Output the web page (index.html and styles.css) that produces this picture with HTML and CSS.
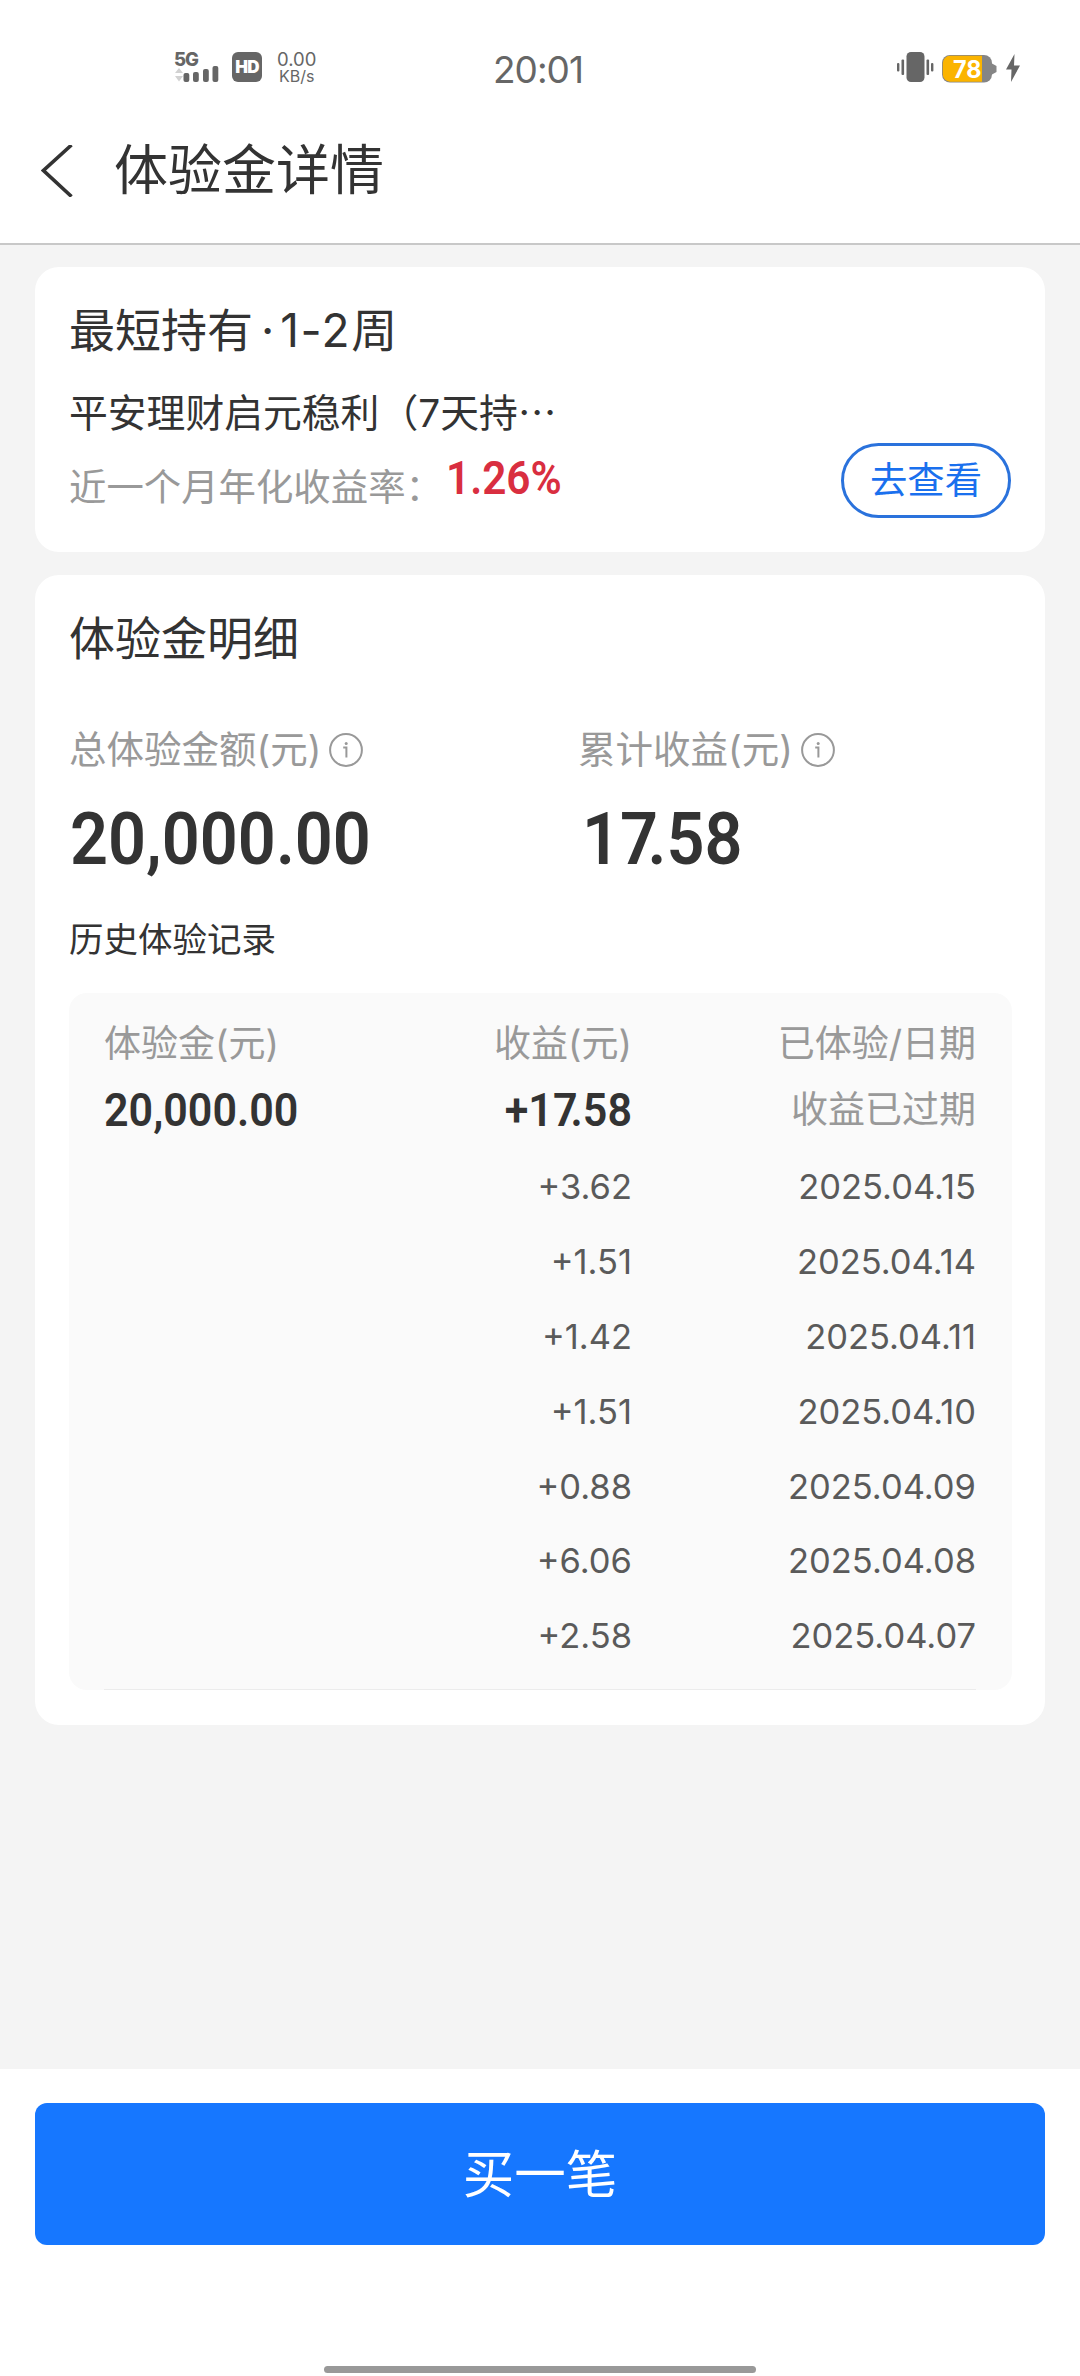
FILE: index.html
```html
<!DOCTYPE html>
<html lang="zh-CN">
<head>
<meta charset="utf-8">
<title>体验金详情</title>
<link rel="stylesheet" href="styles.css">
</head>
<body>
<div class="screen">
  <div class="status">
    <div class="status-left">
      <div class="signal">
        <span class="net-type">5G</span>
        <svg width="46" height="17" viewBox="0 0 46 17">
          <path d="M1 8L5 3L9 8ZM1 11L5 16.500L9 11Z" fill="#d2d2d2"/>
          <rect x="9.500" y="8" width="5.800" height="9" rx="2"/>
          <rect x="19" y="7" width="5.800" height="10" rx="2"/>
          <rect x="29" y="4" width="5.800" height="13" rx="2"/>
          <rect x="38.500" y="1" width="5.800" height="16" rx="2"/>
        </svg>
      </div>
      <span class="hd">HD</span>
      <span class="speed"><span>0.00</span><span class="unit">KB/s</span></span>
    </div>
    <div class="clock">20:01</div>
    <div class="status-right">
      <svg class="vibrate" width="38" height="30" viewBox="0 0 38 30">
        <rect x="9.500" y="0" width="18" height="30" rx="4.500"/>
        <rect x="4.500" y="7.500" width="2.600" height="15.500" rx="1"/>
        <rect x="0" y="11" width="2.400" height="8.500" rx="1"/>
        <rect x="29.500" y="7.500" width="2.600" height="15.500" rx="1"/>
        <rect x="34" y="11" width="2.400" height="8.500" rx="1"/>
      </svg>
      <svg class="battery" width="55" height="28" viewBox="0 0 55 28">
        <rect x="0" y="0" width="50" height="27.500" rx="8" fill="#858585"/>
        <path d="M50 8.500L54.500 11V17L50 19.500Z" fill="#858585"/>
        <path d="M40 .8H8A7.200 7.200 0 0 0 .8 8V19.500A7.200 7.200 0 0 0 8 26.700H40Z" fill="#fbb400"/>
        <text x="11" y="23" class="battery-level" textLength="28.500" lengthAdjust="spacingAndGlyphs">78</text>
      </svg>
      <svg class="bolt" width="14" height="28" viewBox="0 0 14 28"><path d="M8.500 0L0 15.500H5.500L5 28L14 11.500H8Z"/></svg>
    </div>
  </div>

  <header class="header">
    <svg class="back" width="32" height="52" viewBox="0 0 32 52"><path d="M30.500 0L2.500 25.500L30.500 51.500" fill="none" stroke="#333" stroke-width="3.600"/></svg>
    <h1>体验金详情</h1>
  </header>

  <main class="content">
    <section class="card product">
      <h2>最短持有<span class="dot">·</span><span class="term">1-2</span>周</h2>
      <p class="product-name">平安理财启元稳利（7天持⋯</p>
      <div class="rate-row">
        <span class="rate-label">近一个月年化收益率：</span>
        <span class="rate din">1.26%</span>
        <a class="view-btn">去查看</a>
      </div>
    </section>

    <section class="card detail">
      <h2>体验金明细</h2>
      <div class="totals">
        <div class="total">
          <div class="total-label">总体验金额(元)
            <svg class="info" width="34" height="34" viewBox="0 0 34 34"><circle cx="17" cy="17" r="15.900"/><path d="M14.200 14.500H17.400V24.500"/><circle class="pip" cx="17.200" cy="10.500" r="1.500"/></svg>
          </div>
          <div class="total-value din">20,000.00</div>
        </div>
        <div class="total">
          <div class="total-label">累计收益(元)
            <svg class="info" width="34" height="34" viewBox="0 0 34 34"><circle cx="17" cy="17" r="15.900"/><path d="M14.200 14.500H17.400V24.500"/><circle class="pip" cx="17.200" cy="10.500" r="1.500"/></svg>
          </div>
          <div class="total-value din second">1<span class="kern">7</span>.58</div>
        </div>
      </div>
      <h3>历史体验记录</h3>
      <div class="records">
        <div class="row head"><span>体验金(元)</span><span>收益(元)</span><span>已体验/日期</span></div>
        <div class="row sum"><span class="din">20,000.00</span><span class="din gain">+1<span class="kern">7</span>.58</span><span class="expired">收益已过期</span></div>
        <div class="row"><span></span><span>+3.62</span><span>2025.04.15</span></div>
        <div class="row"><span></span><span>+1.51</span><span>2025.04.14</span></div>
        <div class="row"><span></span><span>+1.42</span><span>2025.04.11</span></div>
        <div class="row"><span></span><span>+1.51</span><span>2025.04.10</span></div>
        <div class="row"><span></span><span>+0.88</span><span>2025.04.09</span></div>
        <div class="row"><span></span><span>+6.06</span><span>2025.04.08</span></div>
        <div class="row"><span></span><span>+2.58</span><span>2025.04.07</span></div>
        <div class="rule"></div>
      </div>
    </section>
  </main>

  <footer class="footer">
    <button class="buy">买一笔</button>
    <div class="home-bar"></div>
  </footer>
</div>
</body>
</html>
```
FILE: styles.css
```css
* { box-sizing: border-box; margin: 0; padding: 0; }

body {
  width: 1080px;
  background: #fff;
  color: #333;
  font-family: Inter, "Noto Sans CJK SC", sans-serif;
}

h1, h2, h3 { font-weight: 400; }

.screen {
  display: flex;
  flex-direction: column;
  height: 2376px;
  overflow: hidden;
}

/* Status bar */
.status {
  display: grid;
  grid-template-columns: 316px 96px 1fr;
  height: 100px;
  padding: 51px 60px 0 174px;
  color: #666;
  fill: #666;
}
.status-left, .status-right { display: flex; align-items: flex-start; }
.status-right { justify-content: flex-end; }
.signal { display: flex; flex-direction: column; width: 46px; }
.signal svg { margin-top: -3px; }
.net-type { font-weight: 800; font-size: 18.5px; line-height: 17px; letter-spacing: -1px; }
.hd {
  width: 30px;
  height: 30px;
  margin: 1px 0 0 12px;
  border-radius: 6px;
  background: #666;
  color: #fff;
  font-weight: 900;
  font-size: 17px;
  line-height: 30px;
  letter-spacing: -.8px;
  text-align: center;
}
.speed {
  display: flex;
  flex-direction: column;
  margin-left: 15px;
  font-size: 18.5px;
  line-height: 17px;
  text-align: center;
}
.unit { font-size: 16px; }
.clock {
  font-size: 37px;
  line-height: 37px;
  letter-spacing: -1px;
  text-align: center;
  white-space: nowrap;
}
.vibrate { margin: 1px 7px 0 0; }
.battery { margin: 4px 9px 0 0; }
.battery-level { font: 700 24px Inter, sans-serif; fill: #fff; }
.bolt { margin-top: 3px; }

/* Title bar */
.header {
  display: flex;
  align-items: center;
  height: 145px;
  padding: 0 0 1px 41px;
  border-bottom: 2px solid #c8c8c8;
}
.header h1 { margin-left: 41px; font-size: 54px; line-height: 70px; }

/* Cards */
.content {
  flex: 1;
  display: flex;
  flex-direction: column;
  gap: 23px;
  padding: 22px 35px 0;
  background: #f4f4f4;
}
.card { border-radius: 24px; background: #fff; padding: 0 34px; }
.card h2 { font-size: 46px; line-height: 60px; }

.din {
  font-family: Roboto, sans-serif;
  font-weight: 600;
  white-space: nowrap;
}
.kern { letter-spacing: -.16em; }

.product { height: 285px; padding-top: 33px; }
.product .dot { margin: 0 6px 0 8px; }
.product .term { letter-spacing: 1.5px; }
.product-name { margin-top: 28px; font-size: 38.8px; line-height: 50px; white-space: nowrap; }
.rate-row { display: flex; align-items: center; height: 76px; margin-top: 4px; }
.rate-label { color: #999; font-size: 37.4px; line-height: 50px; padding-top: 15px; width: 377px; white-space: nowrap; }
.rate { color: #d92e40; font-size: 46.500px; line-height: 50px; padding-bottom: 4px; transform: scaleX(.91); transform-origin: left; }
.view-btn {
  width: 170px;
  height: 75px;
  margin-left: auto;
  border: 3px solid #2a72dc;
  border-radius: 38px;
  color: #1a70ee;
  font-size: 37.4px;
  line-height: 69px;
  text-align: center;
}

.detail { height: 1150px; padding-top: 33px; }
.totals { display: grid; grid-template-columns: 509px 1fr; margin-top: 57px; }
.total-label { display: flex; align-items: center; gap: 8px; height: 50px; line-height: 50px; color: #999; font-size: 37.5px; white-space: nowrap; }
.info { fill: none; stroke: #999; stroke-width: 2; }
.info .pip { fill: #999; stroke: none; }
.total-value { margin: 27px 0 0 1px; font-size: 72px; line-height: 76px; transform: scaleX(.925); transform-origin: left; }
.total-value.second { margin-left: 4px; }
.detail h3 { margin-top: 37px; font-size: 34.5px; line-height: 50px; }

/* History table */
.records {
  width: 943px;
  height: 697px;
  margin-top: 28px;
  padding: 18px 36px 0 35px;
  border-radius: 18px;
  background: #fafafa;
}
.row {
  display: grid;
  grid-template-columns: 264px 264px 1fr;
  height: 74.8px;
  align-items: center;
  color: #5a5a5a;
  font-size: 34.5px;
  line-height: 50px;
  text-align: right;
}
.row > :first-child { text-align: left; }
.row.head { height: 66px; color: #999; font-size: 37px; }
.row.sum { height: 66px; margin-bottom: 7px; color: #333; }
.row.sum > .din { font-size: 46.500px; transform: scaleX(.925); transform-origin: left; }
.row.sum > .gain { transform-origin: right; }
.row .expired { color: #999; font-size: 37px; }
.rule { height: 1px; margin-top: 15px; background: #ececec; }

/* Bottom action */
.footer { height: 307px; padding: 34px 35px 0; background: #fff; }
.buy {
  display: block;
  width: 1010px;
  height: 142px;
  border: 0;
  border-radius: 12px;
  background: #1677ff;
  color: #fff;
  font: 400 51.500px/142px Inter, "Noto Sans CJK SC", sans-serif;
}
.home-bar { width: 432px; height: 7px; margin: 121px auto 0; border-radius: 4px; background: #999; }
```
